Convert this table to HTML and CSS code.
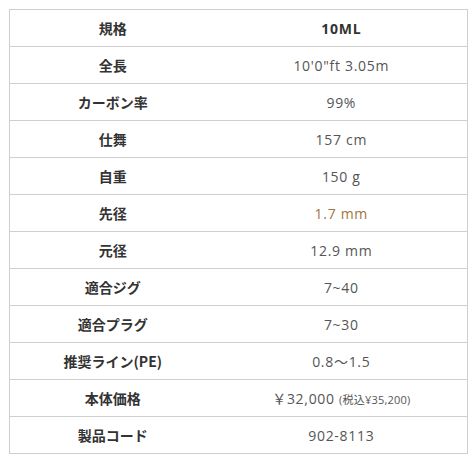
FILE: index.html
```html
<!DOCTYPE html>
<html lang="ja">
<head>
<meta charset="utf-8">
<link rel="stylesheet" href="styles.css">
</head>
<body>
<table class="spec">
  <tbody>
    <tr><th>規格</th><td class="strong">10ML</td></tr>
    <tr><th>全長</th><td>10'0"ft 3.05m</td></tr>
    <tr><th>カーボン率</th><td>99%</td></tr>
    <tr><th>仕舞</th><td>157 cm</td></tr>
    <tr><th>自重</th><td>150 g</td></tr>
    <tr><th>先径</th><td class="accent">1.7 mm</td></tr>
    <tr><th>元径</th><td>12.9 mm</td></tr>
    <tr><th>適合ジグ</th><td>7~40</td></tr>
    <tr><th>適合プラグ</th><td>7~30</td></tr>
    <tr><th>推奨ライン(PE)</th><td>0.8～1.5</td></tr>
    <tr><th>本体価格</th><td>￥32,000 <span class="tax">(税込¥35,200)</span></td></tr>
    <tr><th>製品コード</th><td>902-8113</td></tr>
  </tbody>
</table>
</body>
</html>
```
FILE: styles.css
```css
html, body {
  margin: 0;
  padding: 0;
  background: #fff;
}
body {
  padding: 9px 8px 0 9px;
}
.spec {
  width: 459px;
  border-collapse: collapse;
  border: 1px solid #cfcfcf;
  font-family: "Open Sans", "Noto Sans CJK JP", sans-serif;
}
.spec tr {
  height: 37px;
  border-bottom: 1px solid #cfcfcf;
}
.spec th {
  width: 45%;
  font-family: "Noto Sans CJK JP", sans-serif;
  font-weight: 700;
  font-size: 14px;
  color: #333;
  text-align: center;
  padding: 0;
}
.spec td {
  font-size: 14px;
  color: #555;
  text-align: center;
  padding: 0;
  letter-spacing: 0.7px;
}
.spec td.strong {
  font-weight: 700;
  color: #333;
}
.spec td.accent {
  color: #a27440;
}
.tax {
  font-size: 11px;
  letter-spacing: 0.2px;
  font-family: "Open Sans", "Noto Sans CJK JP", sans-serif;
}
```
